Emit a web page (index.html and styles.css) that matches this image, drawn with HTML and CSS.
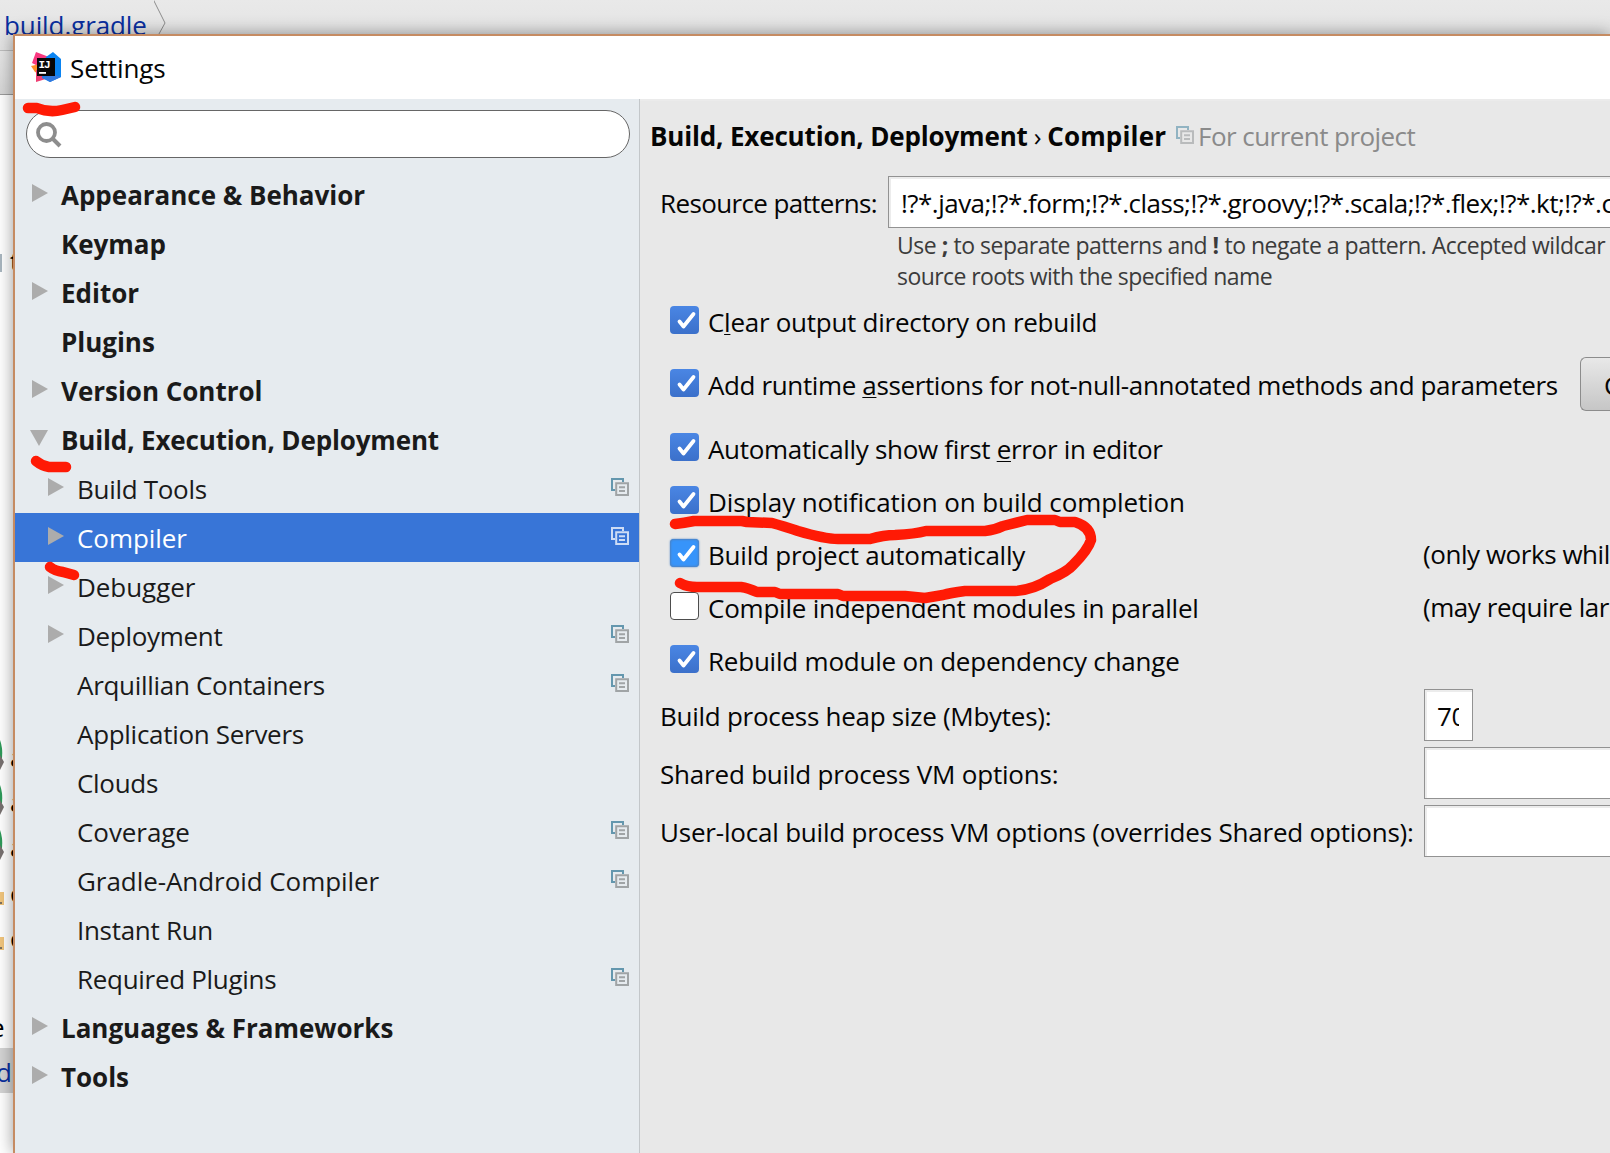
FILE: index.html
```
<!DOCTYPE html>
<html lang="en">
<head>
<meta charset="utf-8">
<title>Settings</title>
<link rel="stylesheet" href="styles.css">
</head>
<body>
<svg class="defs" width="0" height="0">
  <symbol id="copy" viewBox="0 0 18 18"><path class="back" d="M4 12H1V1H12V4" fill="none" stroke-width="2"/><path class="front" d="M5.200 5.200H17V17H5.200ZM8 9.300H14M8 13H14" fill="none" stroke-width="2"/></symbol>
  <symbol id="right" viewBox="0 0 16 18"><path d="M0 0L16 9L0 18Z"/></symbol>
  <symbol id="down" viewBox="0 0 18 16"><path d="M0 0H18L9 16Z"/></symbol>
  <symbol id="check" viewBox="0 0 29 28"><path d="M9.500 15.500L13.500 20.500L23.500 8" fill="none" stroke="#fff" stroke-width="3.800" stroke-linecap="round" stroke-linejoin="round"/></symbol>
</svg>

<div class="ide">
  <div class="crumbs"><span class="crumb">build.gradle</span><svg class="chevron" width="14" height="50"><path d="M-1 -1L11 23L0 43" fill="none" stroke="#8c8c8c"/></svg></div>
  <div class="toolbar"></div>
  <svg class="tree-edge" width="14" height="1057" viewBox="0 95 14 1057">
    <rect x="0" y="254" width="2" height="18" fill="#a9b6bf"/>
    <text x="10" y="271">t</text>
    <g fill="#2f9a59"><path d="M0 740Q3 748 2 758L0 760Z"/><path d="M0 785Q3 793 2 803L0 805Z"/><path d="M0 830Q3 838 2 848L0 850Z"/></g>
    <g fill="#77706f"><path d="M0 755L4 762L0 770Z"/><path d="M0 800L4 807L0 815Z"/><path d="M0 845L4 852L0 860Z"/></g>
    <text x="10" y="767">a</text><text x="10" y="812">a</text><text x="10" y="857">a</text>
    <g fill="#f1c57c"><rect y="892" width="4" height="13"/><rect y="937" width="4" height="13"/></g>
    <path d="M0 903H2M0 948H2" stroke="#555" stroke-width="1.500"/>
    <text x="10" y="903">c</text><text x="10" y="948">c</text>
    <text x="-10" y="1037">e</text>
    <rect x="0" y="1048" width="14" height="45" fill="#d4d4d4"/>
    <text class="link" x="-4" y="1082">d</text>
  </svg>
</div>

<div class="dialog">
  <header class="titlebar">
    <svg class="logo" width="31" height="32" viewBox="0 0 31 32">
      <path d="M5 1L18 6L13 18L1 12Z" fill="#f8387f"/><path d="M0 15L9 13L12 24L4 21Z" fill="#ff8f2a"/><path d="M5 19L17 20L18 27L5 31Z" fill="#ef3f72"/>
      <path d="M15 6L22 1L30 8V26L19 31L11 27Z" fill="#0a84f2"/><path d="M11 26L24 24L30 26L19 31Z" fill="#3379dd"/>
      <rect x="6" y="7" width="18" height="18" fill="#070707"/>
      <text class="logo-text" x="7.500" y="17">IJ</text><rect x="8" y="21" width="7" height="1.800" fill="#fff"/>
    </svg>
    <span>Settings</span>
  </header>
  <div class="body">
    <aside class="sidebar">
      <div class="search"><svg width="26" height="26" viewBox="0 0 26 26" fill="none" stroke="#8d8d8d"><circle cx="10.500" cy="10.500" r="8.500" stroke-width="3.800"/><path d="M16.500 16.500L24 24" stroke-width="4"/></svg></div>
      <nav class="tree">
        <div class="item top"><svg class="arrow"><use href="#right"/></svg><b>Appearance &amp; Behavior</b></div>
        <div class="item top"><i class="arrow"></i><b>Keymap</b></div>
        <div class="item top"><svg class="arrow"><use href="#right"/></svg><b>Editor</b></div>
        <div class="item top"><i class="arrow"></i><b>Plugins</b></div>
        <div class="item top"><svg class="arrow"><use href="#right"/></svg><b>Version Control</b></div>
        <div class="item top expanded"><svg class="arrow open"><use href="#down"/></svg><b>Build, Execution, Deployment</b></div>
        <div class="item"><svg class="arrow"><use href="#right"/></svg><span>Build Tools</span><svg class="copy"><use href="#copy"/></svg></div>
        <div class="item selected wide"><svg class="arrow"><use href="#right"/></svg><span>Compiler</span><svg class="copy"><use href="#copy"/></svg></div>
        <div class="item wide"><svg class="arrow"><use href="#right"/></svg><span>Debugger</span></div>
        <div class="item"><svg class="arrow"><use href="#right"/></svg><span>Deployment</span><svg class="copy"><use href="#copy"/></svg></div>
        <div class="item"><i class="arrow"></i><span>Arquillian Containers</span><svg class="copy"><use href="#copy"/></svg></div>
        <div class="item"><i class="arrow"></i><span>Application Servers</span></div>
        <div class="item"><i class="arrow"></i><span>Clouds</span></div>
        <div class="item wide"><i class="arrow"></i><span>Coverage</span><svg class="copy"><use href="#copy"/></svg></div>
        <div class="item wide"><i class="arrow"></i><span>Gradle-Android Compiler</span><svg class="copy"><use href="#copy"/></svg></div>
        <div class="item"><i class="arrow"></i><span>Instant Run</span></div>
        <div class="item"><i class="arrow"></i><span>Required Plugins</span><svg class="copy"><use href="#copy"/></svg></div>
        <div class="item top"><svg class="arrow"><use href="#right"/></svg><b>Languages &amp; Frameworks</b></div>
        <div class="item top"><svg class="arrow"><use href="#right"/></svg><b>Tools</b></div>
      </nav>
    </aside>
    <main class="panel">
      <h1 class="heading"><b>Build, Execution, Deployment</b><span class="sep">›</span><b class="page">Compiler</b><svg class="copy light"><use href="#copy"/></svg><span class="scope">For current project</span></h1>
      <div class="patterns"><label>Resource patterns:</label><div class="field"><span>!?*.java;!?*.form;!?*.class;!?*.groovy;!?*.scala;!?*.flex;!?*.kt;!?*.c</span></div></div>
      <p class="hint">Use <b>;</b> to separate patterns and <b>!</b> to negate a pattern. Accepted wildcar<br><span class="tight">source roots with the specified name</span></p>
      <div class="option first"><svg class="box on"><use href="#check"/></svg><span>C<u>l</u>ear output directory on rebuild</span></div>
      <div class="option second"><svg class="box on"><use href="#check"/></svg><span>Add runtime <u>a</u>ssertions for not-null-annotated methods and parameters</span><div class="button">C</div></div>
      <div class="option narrow"><svg class="box on"><use href="#check"/></svg><span>Automatically show first <u>e</u>rror in editor</span></div>
      <div class="option wide"><svg class="box on"><use href="#check"/></svg><span>Display notification on build completion</span></div>
      <div class="option"><svg class="box on focus"><use href="#check"/></svg><span class="name">Build project automatically</span><span class="note">(only works whil</span></div>
      <div class="option"><i class="box"></i><span class="name">Compile independent modules in parallel</span><span class="note">(may require lar</span></div>
      <div class="option"><svg class="box on"><use href="#check"/></svg><span>Rebuild module on dependency change</span></div>
      <div class="settings">
        <label class="heap">Build process heap size (Mbytes):</label><div class="field small"><span>70</span></div>
        <label>Shared build process VM options:</label><div class="field"></div>
        <label>User-local build process VM options (overrides Shared options):</label><div class="field"></div>
      </div>
    </main>
  </div>
</div>

<svg class="marks" width="1610" height="1153" fill="none" stroke="#ff1a05" stroke-width="10.500" stroke-linecap="round" stroke-linejoin="round">
  <path d="M28 108L37 108Q49 113 62 110L75 107"/>
  <path d="M36 461Q42 466 49 467H66"/>
  <path d="M50 567Q55 571 63 572L74 575"/>
  <path d="M675 524Q684 523 694 521H742L747 522L772 523Q783 526 798 531Q825 539 838 539H870Q884 535 895 535Q915 534 926 531L985 531Q995 530 1003 526L1027 520H1055L1060 522H1075Q1091 527 1091 540Q1088 550 1073 565Q1067 572 1050 579Q1033 590 1015 591L965 591Q950 593 943 595L925 598L905 596H843L838 594H780L775 592H757Q748 588 741 587H697Q687 587 680 583"/>
</svg>
</body>
</html>
```
FILE: styles.css
```
* { box-sizing: border-box; }
body {
  margin: 0;
  width: 1610px;
  height: 1153px;
  overflow: hidden;
  position: relative;
  background: #fff;
  color: #050505;
  font: 26px/1.36 "Open Sans", "Noto Sans", sans-serif;
  letter-spacing: -0.3px;
  white-space: nowrap;
}
b { letter-spacing: -0.16px; }
svg { display: block; flex: none; }
.defs, .dialog, .marks { position: absolute; }
.marks { left: 0; top: 0; }

.crumbs { height: 51px; display: flex; padding-left: 4px; background: linear-gradient(#e9e9e9, #e2e2e2); border-bottom: 1px solid #bdbdbd; }
.crumb { line-height: 51px; color: #0a2f9f; width: 150px; letter-spacing: -0.1px; }
.toolbar { height: 44px; background: linear-gradient(#e6e6e6, #d6d6d6); border-bottom: 1px solid #9b9b9b; }
.tree-edge .link { fill: #0a2f9f; }

.dialog {
  left: 13px;
  top: 34px;
  width: 1597px;
  height: 1119px;
  border: solid #c58b62;
  border-width: 2px 0 0 2px;
  box-shadow: 0 0 16px rgba(0, 0, 0, 0.4);
  background: #e8e8e8;
}
.titlebar { height: 63px; display: flex; align-items: center; gap: 7px; padding-left: 17px; background: #fff; letter-spacing: -0.1px; }
.titlebar span { padding-top: 2px; }
.logo { margin: 0 1px 1px -1px; }
.logo-text { font: bold 11px "Liberation Mono", monospace; fill: #fff; letter-spacing: -1px; }
.body { display: flex; height: 1054px; }

.sidebar { width: 625px; padding: 11px 9px 0 11px; background: #e6ebef; border-right: 1px solid #c3c7ca; flex: none; }
.search { height: 48px; border: 1px solid #666; border-radius: 24px; background: #fff; padding: 11px 9px; }
.tree { margin: 12px -9px 0 -11px; }
.item { height: 49px; display: flex; align-items: center; padding: 0 10px 0 33px; color: #1a1a1a; }
.item.top { padding-left: 17px; }
.item b, .item span { padding-top: 2px; }
.item b { letter-spacing: -0.02px; }
.expanded b { letter-spacing: -0.15px; }
.arrow { width: 16px; height: 18px; margin: 0 13px 4px 0; fill: #acacac; flex: none; }
.arrow.open { width: 18px; height: 16px; margin: 0 13px 3px -2px; }
.selected { background: #3875d7; color: #fff; }
.copy { width: 18px; height: 18px; margin: 0 0 4px auto; }
.back { stroke: #6497ae; }
.front { stroke: #a0a4a6; }
.selected .copy { filter: brightness(0) invert(1); opacity: 0.75; }
.wide { letter-spacing: -0.06px; }
.tight { letter-spacing: -0.58px; }

.panel { flex: 1; padding-left: 21px; border-top: 2px solid #ebebeb; min-width: 0; }
.heading { margin: 0 0 0 -11px; height: 75px; display: flex; align-items: center; padding-bottom: 3px; font-size: 26px; font-weight: 400; }
.heading .sep { margin: 0 6px; }
.heading .page { letter-spacing: 0.15px; }
.heading .copy { margin: 0 4px 4px 10px; opacity: 0.65; }
.scope { color: #8a8a8a; letter-spacing: -0.56px; }
.patterns { display: flex; align-items: center; height: 52px; }
label { padding-top: 4px; margin-left: -1px; letter-spacing: -0.2px; }
.patterns label { width: 228px; letter-spacing: -0.63px; padding-top: 3px; }
.patterns .field { letter-spacing: -0.52px; padding-left: 12px; }
.field { height: 52px; flex: 1; background: #fff; border: 1px solid #929292; border-right: 0; box-shadow: inset 2px 2px 0 #ececec; padding: 0 13px; line-height: 52px; overflow: hidden; }
.hint { margin: 2px 0 0 236px; font-size: 23px; line-height: 31px; color: #3b3b3b; letter-spacing: -0.5px; }
.option { height: 53px; display: flex; align-items: center; padding-left: 9px; letter-spacing: -0.22px; }
.option > span { padding-top: 2px; }
.option.first { height: 60px; letter-spacing: -0.27px; }
.option.second { height: 66px; margin-bottom: 4px; letter-spacing: -0.37px; }
.option.narrow { letter-spacing: -0.32px; }
.option.wide { letter-spacing: -0.1px; }
.option .note { letter-spacing: -0.45px; padding-top: 1px; }
.box { width: 29px; height: 28px; margin: 0 9px 4px 0; border-radius: 4px; border: 1px solid #4d4d4d; background: #fff; flex: none; }
.box.on { border: 0; background: linear-gradient(#4a86e4, #3b70ca); }
.box.focus { background: #3794fa; box-shadow: inset 0 0 2px 1px #4c83c4, 0 0 2px #4c83c4; }
u { text-decoration-thickness: 1px; text-underline-offset: 2px; }
.button { margin: 0 0 2px auto; width: 30px; height: 54px; border: 1px solid #8c8c8c; border-right: 0; border-radius: 6px 0 0 6px; background: linear-gradient(#e8e8e8, #c6c6c6); padding-left: 23px; line-height: 54px; overflow: hidden; }
.name { width: 715px; flex: none; }
.settings { display: grid; grid-template-columns: 763px 1fr; row-gap: 6px; align-items: center; margin-top: 2px; }
.heap { letter-spacing: -0.27px; }
.field.small { width: 49px; padding: 0 12px; border-right: 1px solid #929292; }
.field.small span { display: block; overflow: hidden; width: 22px; }
```
